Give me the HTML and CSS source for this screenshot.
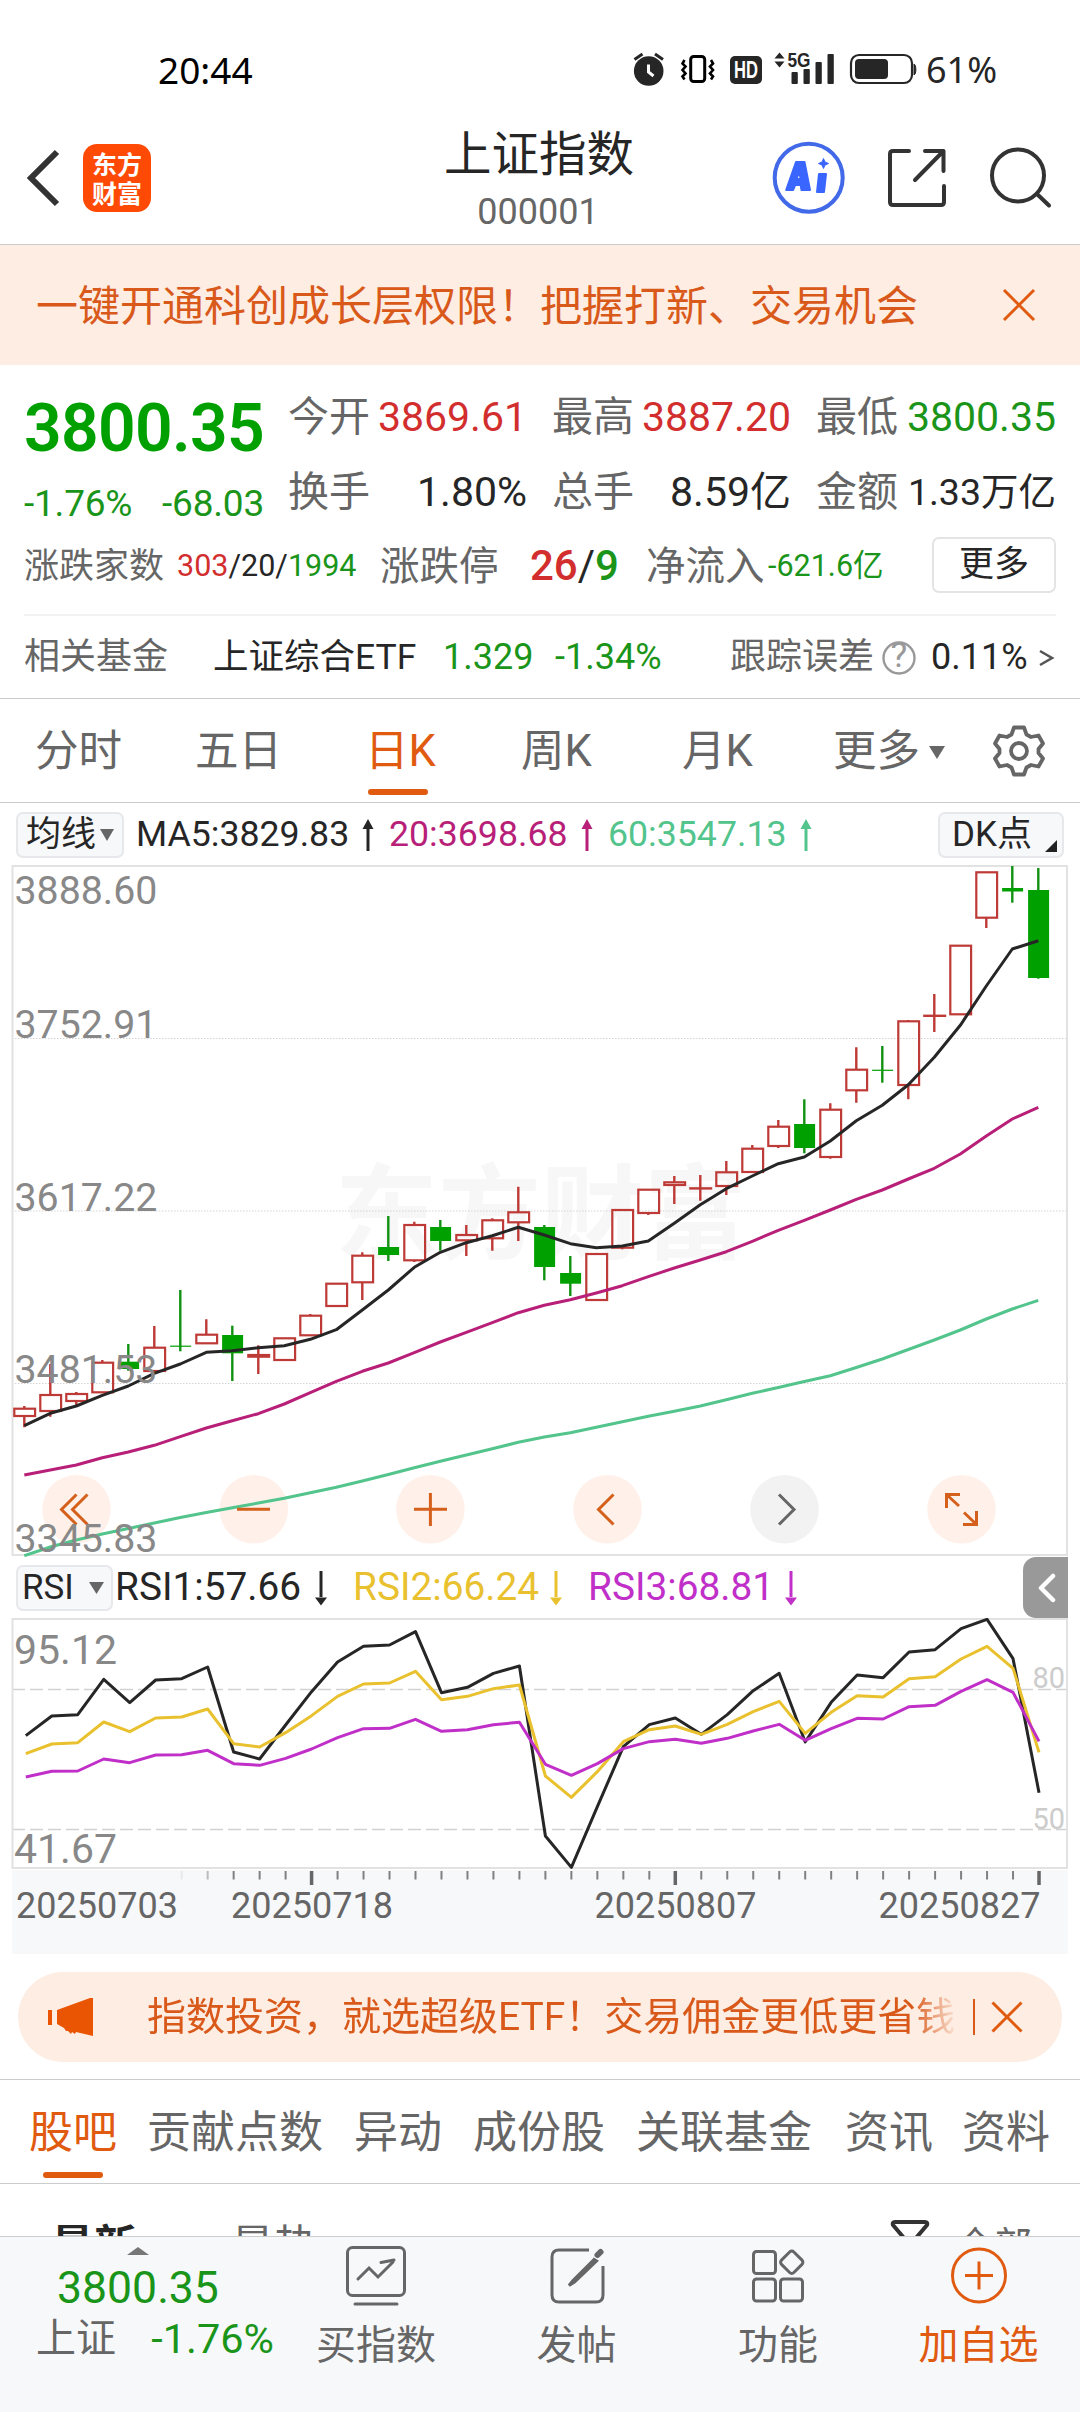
FILE: index.html
```html
<!DOCTYPE html>
<html lang="zh-CN">
<head>
<meta charset="utf-8">
<title>上证指数 000001</title>
<link rel="stylesheet" href="styles.css">
</head>
<body>
<div class="screen">
  <div class="status">
    <span class="clock">20:44</span>
    <svg class="status-icons" width="290" height="40" viewBox="630 50 290 40">
      <g fill="#262626">
        <circle cx="648.7" cy="71" r="14.8"/>
        <path d="M634.5 59.5l8-5.5M663 59.5l-8-5.5" stroke="#262626" stroke-width="3" fill="none"/>
        <path d="M648.5 64.500v7.500l5 4" stroke="#fff" stroke-width="3" fill="none"/>
        <rect x="690.700" y="56.500" width="14" height="25" rx="3" fill="none" stroke="#000" stroke-width="3"/>
        <path d="M684.500 60l-2 3.500 3 3-3 3.500 3 3.500-3 3 2 3M711 60l2 3.500-3 3 3 3.500-3 3.500 3 3-2 3" fill="none" stroke="#000" stroke-width="2.600"/>
        <rect x="730" y="56" width="32" height="28" rx="5"/>
        <path d="M774.500 58.500l5-6 5 6zM774.500 61.500l5 6 5-6z"/>
        <rect x="791.500" y="72" width="6.300" height="12" rx="1"/>
        <rect x="803.500" y="69" width="6.300" height="15" rx="1"/>
        <rect x="815.500" y="62" width="6.300" height="22" rx="1"/>
        <rect x="827.500" y="54" width="6.300" height="30" rx="1"/>
        <rect x="851" y="55" width="61" height="28" rx="8" fill="none" stroke="#262626" stroke-width="2.200"/>
        <rect x="855" y="59" width="33" height="20" rx="4"/>
        <path d="M914 64c2.500 1 2.500 10 0 11z" stroke="#262626"/>
      </g>
      <text class="hd" x="746" y="78" text-anchor="middle" textLength="24" lengthAdjust="spacingAndGlyphs">HD</text>
      <text class="fiveg" x="787.500" y="67" textLength="23" lengthAdjust="spacingAndGlyphs">5G</text>
    </svg>
    <span class="battery">61%</span>
  </div>

  <header class="header">
    <div class="head-left">
      <svg width="34" height="58" viewBox="0 0 34 58"><path d="M31 3L5 29l26 26" fill="none" stroke="#333" stroke-width="6"/></svg>
      <div class="logo"><span>东方</span><span>财富</span></div>
    </div>
    <div class="head-title"><h1>上证指数</h1><p>000001</p></div>
    <div class="head-right">
      <svg width="74" height="74" viewBox="0 0 74 74"><circle cx="36.700" cy="36.700" r="34" fill="#fff" stroke="#4169e8" stroke-width="4"/><g fill="#3a66ff" stroke="#3a66ff" stroke-width="2" stroke-linejoin="round"><path fill-rule="evenodd" d="M24 21h8.500l5.500 28h-8.500l-.8-5h-5.500l-2 5h-7zM27.500 30l-3 8h4z"/><path d="M47 33h7l-2 18h-7z"/><path stroke-width="1" d="M51.500 17.500l1.500 3.500 3.500 1.500-3.500 1.500-1.500 3.500-1.500-3.500-3.500-1.500 3.500-1.500z"/></g></svg>
      <svg width="58" height="58" viewBox="0 0 58 58" fill="none" stroke="#333" stroke-width="4" stroke-linecap="round" stroke-linejoin="round"><path d="M21 2H5Q2 2 2 5v48q0 3 3 3h48q3 0 3-3V37"/><path d="M37 2h18.500v20M54.500 3L27 31"/></svg>
      <svg width="64" height="64" viewBox="0 0 64 64" fill="none" stroke="#333" stroke-width="4" stroke-linecap="round"><circle cx="30" cy="29.500" r="26"/><path d="M49 48l12 11.500"/></svg>
    </div>
  </header>

  <div class="notice">
    <span>一键开通科创成长层权限！把握打新、交易机会</span>
    <svg width="34" height="34" viewBox="0 0 34 34"><path d="M2 2l30 30M32 2L2 32" stroke="#e05a10" stroke-width="3"/></svg>
  </div>

  <section class="quote">
    <div class="quote-main">
      <div class="price-col"><strong>3800.35</strong><p><span>-1.76%</span><span>-68.03</span></p></div>
      <dl class="stats">
        <div><dt>今开</dt><dd class="red">3869.61</dd></div>
        <div><dt>最高</dt><dd class="red">3887.20</dd></div>
        <div><dt>最低</dt><dd class="green">3800.35</dd></div>
        <div><dt>换手</dt><dd>1.80%</dd></div>
        <div><dt>总手</dt><dd>8.59亿</dd></div>
        <div><dt>金额</dt><dd class="tight">1.33万亿</dd></div>
      </dl>
    </div>
    <div class="breadth">
      <span class="lab s35">涨跌家数</span>
      <span class="ratio"><i class="red">303</i>/20/<i class="green">1994</i></span>
      <span class="lab s39">涨跌停</span>
      <span class="limit"><i class="red">26</i>/<i class="green">9</i></span>
      <span class="lab s39">净流入</span>
      <span class="flow green">-621.6亿</span>
      <button class="more">更多</button>
    </div>
    <div class="fund">
      <span class="lab">相关基金</span><span>上证综合ETF</span><span class="green">1.329</span><span class="green">-1.34%</span><span class="lab">跟踪误差</span>
      <svg width="34" height="34" viewBox="0 0 34 34"><circle cx="17" cy="17" r="15.500" fill="none" stroke="#999" stroke-width="2.400"/><text x="17" y="26" text-anchor="middle" class="qmark">?</text></svg>
      <span>0.11%</span>
      <svg width="17" height="20" viewBox="0 0 17 20"><path d="M2 3l12 7-12 7" fill="none" stroke="#555" stroke-width="2.600"/></svg>
    </div>
  </section>

  <nav class="periods">
    <span>分时</span><span>五日</span><span class="on">日K</span><span>周K</span><span>月K</span><span class="with-caret">更多<svg width="16" height="13" viewBox="0 0 16 13"><path d="M0 0h16L8 13z" fill="#666"/></svg></span>
    <svg class="gear" width="54" height="54" viewBox="-27 -27 54 54" fill="none" stroke="#666" stroke-width="3.800" stroke-linejoin="round"><path d="M-5-23.500H5L7.500-16.500 12-14 19.500-15.500 24-7.500 19.500-2V2L24 7.500 19.500 15.500 12 14 7.500 16.500 5 23.500H-5L-7.500 16.500-12 14-19.500 15.500-24 7.500-19.500 2V-2L-24-7.500-19.500-15.500-12-14-7.500-16.500z"/><circle r="8"/></svg>
  </nav>

  <div class="ma-row">
    <button class="chip">均线<svg width="14" height="12" viewBox="0 0 14 12"><path d="M0 0h14L7 12z" fill="#666"/></svg></button>
    <span class="ma5">MA5:3829.83</span><svg class="arrow ma5" width="12" height="34" viewBox="0 0 12 34"><path d="M6 33V8" stroke="currentColor" stroke-width="3"/><path d="M6 1l5.500 10h-11z" fill="currentColor"/></svg>
    <span class="ma20">20:3698.68</span><svg class="arrow ma20" width="12" height="34" viewBox="0 0 12 34"><path d="M6 33V8" stroke="currentColor" stroke-width="3"/><path d="M6 1l5.500 10h-11z" fill="currentColor"/></svg>
    <span class="ma60">60:3547.13</span><svg class="arrow ma60" width="12" height="34" viewBox="0 0 12 34"><path d="M6 33V8" stroke="currentColor" stroke-width="3"/><path d="M6 1l5.500 10h-11z" fill="currentColor"/></svg>
    <button class="chip dk">DK点<svg width="12" height="12" viewBox="0 0 12 12"><path d="M12 0v12H0z" fill="#222"/></svg></button>
  </div>

  <svg class="kline" width="1080" height="694" viewBox="0 863 1080 694">
    <text class="watermark" x="335" y="1251" textLength="412">东方财富</text>
    <g class="grid"><path d="M12 1038.500H1067M12 1211H1067M12 1383.500H1067"/></g>
    <rect class="frame" x="12.500" y="866" width="1054.500" height="689"/>
    <g class="ctl">
      <circle cx="76.500" cy="1509.300" r="34.300"/><circle cx="253.800" cy="1509.300" r="34.300"/><circle cx="430.400" cy="1509.300" r="34.300"/><circle cx="607.500" cy="1509.300" r="34.300"/><circle class="off" cx="784.500" cy="1509.300" r="34.300"/><circle cx="961.500" cy="1509.300" r="34.300"/>
    </g>
    <g id="candles"></g>
    <g id="averages"></g>
    <g class="ctl-icons">
      <path d="M76.500 1494.500l-15 15 15 15M87.500 1494.500l-15 15 15 15"/>
      <path d="M237 1509.300h33M414 1509.300h33M430.400 1493v33"/>
      <path d="M613.500 1494.500l-15 15 15 15"/>
      <path class="off" d="M779 1494.500l15 15-15 15"/>
      <path d="M946.500 1508v-13.500h13.500M947 1495l12 11M976.500 1511v13.500h-13.500M976 1524l-12-11.500"/>
    </g>
    <g class="scale"><text x="14.500" y="904">3888.60</text><text x="14.500" y="1038">3752.91</text><text x="14.500" y="1211">3617.22</text><text x="14.500" y="1382.700">3481.53</text><text x="14.500" y="1552">3345.83</text></g>
  </svg>

  <div class="rsi-row">
    <button class="chip">RSI<svg width="15" height="12" viewBox="0 0 15 12"><path d="M0 0h15L7.500 12z" fill="#666"/></svg></button>
    <span class="rsi1">RSI1:57.66</span><svg class="arrow rsi1" width="12" height="36" viewBox="0 0 12 36"><path d="M6 1v26" stroke="currentColor" stroke-width="3"/><path d="M6 35.500l6-8H0z" fill="currentColor"/></svg>
    <span class="rsi2">RSI2:66.24</span><svg class="arrow rsi2" width="12" height="36" viewBox="0 0 12 36"><path d="M6 1v26" stroke="currentColor" stroke-width="3"/><path d="M6 35.500l6-8H0z" fill="currentColor"/></svg>
    <span class="rsi3">RSI3:68.81</span><svg class="arrow rsi3" width="12" height="36" viewBox="0 0 12 36"><path d="M6 1v26" stroke="currentColor" stroke-width="3"/><path d="M6 35.500l6-8H0z" fill="currentColor"/></svg>
    <button class="drawer"><svg width="20" height="30" viewBox="0 0 20 30"><path d="M16 3L4 15l12 12" fill="none" stroke="#fff" stroke-width="4.500" stroke-linecap="round" stroke-linejoin="round"/></svg></button>
  </div>

  <svg class="rsi" width="1080" height="336" viewBox="0 1618 1080 336">
    <rect x="12" y="1870" width="1056" height="84" fill="#f7f8fa"/>
    <path class="bands" d="M12 1689.500H1067M12 1829.500H1067"/>
    <rect class="frame" x="12.500" y="1619" width="1054.500" height="249"/>
    <g class="scale wide"><text x="14" y="1664">95.12</text><text x="14" y="1863">41.67</text></g>
    <g class="bandtext"><text x="1065" y="1688" text-anchor="end">80</text><text x="1065" y="1828.500" text-anchor="end">50</text></g>
    <g id="oscillators"></g>
    <g id="ticks"></g>
    <g class="dates"><text x="16" y="1917.700">20250703</text><text x="231" y="1917.700">20250718</text><text x="594.500" y="1917.700">20250807</text><text x="878.500" y="1917.700">20250827</text></g>
  </svg>

  <div class="promo">
    <svg width="46" height="40" viewBox="0 0 46 40" fill="#ea5504"><path d="M0 13h4v15H0zM9 13L42 1h3v38l-17-4-1 2-3-2-1 2-3-3-2 0-2-3-7-4z"/></svg>
    <span>指数投资，就选超级ETF！交易佣金更低更省钱</span>
    <i></i>
    <svg width="32" height="32" viewBox="0 0 32 32"><path d="M1.500 1.500l29 29M30.500 1.500l-29 29" stroke="#e05a10" stroke-width="3"/></svg>
  </div>

  <nav class="sections"><span class="on">股吧</span><span>贡献点数</span><span>异动</span><span>成份股</span><span>关联基金</span><span>资讯</span><span>资料</span></nav>

  <div class="posts">
    <b>最新</b><span>最热</span>
    <svg width="40" height="36" viewBox="0 0 40 36"><path d="M5 2h30q3 0 2 3L26 18v14H14V18L3 5Q2 2 5 2z" fill="none" stroke="#333" stroke-width="4"/></svg>
    <span>全部</span>
  </div>

  <footer class="dock">
    <div class="ticker">
      <svg width="22" height="8" viewBox="0 0 22 8"><path d="M11 0l11 8H0z" fill="#777"/></svg>
      <strong>3800.35</strong>
      <p><span>上证</span><em>-1.76%</em></p>
    </div>
    <div class="act">
      <svg width="60" height="62" viewBox="0 0 60 62" fill="none" stroke="#666" stroke-width="3"><rect x="1.500" y="3.500" width="57" height="48" rx="5"/><path d="M12 35l11-11 9 9 15-15M35 18.500l13-2.500" stroke-linecap="round"/><path d="M9 60h42" stroke-linecap="round"/></svg>
      <span>买指数</span>
    </div>
    <div class="act">
      <svg width="56" height="62" viewBox="0 0 56 62" fill="none" stroke="#666" stroke-width="3"><path d="M40 6H10q-7 0-7 7v38q0 7 7 7h37q7 0 7-7V22"/><path d="M45 15.500L24 36.500l-4 5 5.500-3.500L47.500 17z" fill="#666"/><path d="M48.500 11l3-3" stroke-width="6" stroke-linecap="round"/></svg>
      <span>发帖</span>
    </div>
    <div class="act">
      <svg width="54" height="62" viewBox="0 0 54 62" fill="none" stroke="#666" stroke-width="3"><rect x="2.500" y="7.500" width="22" height="22" rx="3"/><rect x="2.500" y="35" width="22" height="22" rx="3"/><rect x="29.500" y="35" width="22" height="22" rx="3"/><rect x="32" y="9.500" width="17.500" height="17.500" rx="3" transform="rotate(45 40.750 18.250)"/></svg>
      <span>功能</span>
    </div>
    <div class="act add">
      <svg width="60" height="62" viewBox="0 0 60 62" fill="none" stroke="#e05a10" stroke-width="3"><circle cx="30" cy="31.500" r="26.500"/><path d="M16 31.500h28M30 17.500v28"/></svg>
      <span>加自选</span>
    </div>
  </footer>
</div>
<script src="chart.js"></script>
</body>
</html>
```
FILE: styles.css
```css
* { box-sizing: border-box; margin: 0; padding: 0; }
body { background: #fff; }
.screen {
  width: 1080px; height: 2412px; overflow: hidden; background: #fff; color: #262626;
  font-family: Roboto, "Noto Sans CJK SC", sans-serif; font-size: 36px; line-height: 1.2;
  display: flex; flex-direction: column;
}
.screen > * { flex-shrink: 0; }
svg { display: block; flex-shrink: 0; }
i, em { font-style: normal; }
button { font: inherit; color: inherit; border: 0; background: none; white-space: nowrap; }
span, dt, dd, h1 { white-space: nowrap; }
.red { color: #d22e2e; }
.green { color: #1a951a; }

.status { height: 112px; padding: 28px 0 0 158px; display: flex; align-items: center; }
.clock { width: 472px; font-family: "Noto Sans", sans-serif; font-size: 37px; color: #000; }
.status-icons { margin-right: 6px; }
.battery { font-family: "Noto Sans", sans-serif; font-size: 36px; }
.hd { font: 700 23px "Liberation Sans", sans-serif; fill: #fff; }
.fiveg { font: 700 20px "Liberation Sans", sans-serif; fill: #262626; }

.header { height: 133px; border-bottom: 1px solid #ccc; display: grid; grid-template-columns: 400px 278px 402px; }
.head-left { display: flex; align-items: center; gap: 23px; padding-left: 26px; }
.logo { width: 68px; height: 68px; border-radius: 14px; background: #ff4a05; color: #fff; display: flex; flex-direction: column; align-items: center; justify-content: center; font-size: 25px; line-height: 29px; font-weight: 700; font-family: "Noto Sans CJK SC", sans-serif; }
.head-title { text-align: center; padding-top: 15px; }
.head-title h1 { font-size: 47.500px; line-height: 56px; font-weight: 400; }
.head-title p { font-size: 36px; line-height: 44px; margin-top: 7px; padding-right: 2px; color: #666; }
.head-right { display: flex; align-items: center; gap: 42px; padding-left: 94px; }

.notice { height: 120px; background: #fdede3; color: #d9591a; font-size: 42px; display: flex; align-items: center; justify-content: space-between; padding: 4px 44px 0 36px; }
.notice svg { margin-bottom: 5px; }

.quote { height: 334px; padding: 24px 24px 0; border-bottom: 1px solid #ccc; }
.quote-main { display: flex; height: 146px; }
.price-col { width: 264px; color: #00a000; }
.price-col strong { display: block; font-size: 66px; line-height: 80px; font-weight: 600; letter-spacing: -.700px; }
.price-col p { display: flex; justify-content: space-between; width: 240px; font-size: 37px; line-height: 44px; padding-top: 13px; color: #1a951a; letter-spacing: -.200px; }
.stats { display: grid; grid-template-columns: 239px 239px 240px; column-gap: 25px; grid-template-rows: 56px 56px; row-gap: 19px; }
.stats div { display: flex; justify-content: space-between; align-items: center; line-height: 56px; }
.stats dt { font-size: 41px; color: #666; }
.stats dd { font-size: 41px; }
.stats .tight { font-size: 37.500px; }
.lab { color: #666; }
.breadth { display: grid; grid-template-columns: 153px 203px 150px 116px 122px 164px 124px; align-items: center; height: 59px; }
.breadth span { padding-top: 4px; }
.s35 { font-size: 35px; }
.s39 { font-size: 39.500px; }
.ratio { font-size: 30.500px; }
.limit { font-size: 42px; }
.limit i { font-weight: 500; }
.flow { font-size: 30.500px; }
.more { height: 56px; border: 2px solid #e4e4e4; border-radius: 7px; font-size: 35px; }
.fund { margin-top: 20px; border-top: 2px solid #f3f3f3; height: 85px; display: grid; grid-template-columns: 189px 230px 112px 175px 152px 49px 107px 17px; align-items: center; }
.fund :nth-child(2) { font-size: 35.500px; }
.qmark { font-size: 26px; fill: #999; }

.periods { height: 104px; border-bottom: 1px solid #ccc; padding-left: 35px; display: grid; grid-template-columns: 160px 170px 156px 161px 151px 159px 54px; align-items: center; font-size: 43.500px; color: #666; line-height: 106px; }
.periods .on { color: #e05a10; position: relative; }
.periods .on::after { content: ""; position: absolute; left: 3px; bottom: 10px; width: 60px; height: 6px; border-radius: 3px; background: #e05a10; }
.with-caret { display: flex; align-items: center; gap: 9px; }
.gear { margin-top: -3px; }

.chip { height: 46px; border: 2px solid #e6e8ec; border-radius: 7px; background: #f7f8fa; display: flex; align-items: center; }
.arrow { align-self: center; }
.ma-row { height: 60px; padding: 3px 16px 0; display: grid; grid-template-columns: 120px 226px 27px 192px 27px 192px 138px 126px; align-items: center; font-size: 35.700px; }
.ma-row .chip { width: 108px; padding-left: 8px; font-size: 35px; gap: 4px; }
.ma-row .dk { width: 126px; padding-left: 12px; gap: 13px; font-size: 35px; }
.dk svg { align-self: flex-end; margin-bottom: 4px; }
.ma5, .rsi1 { color: #262626; }
.ma20 { color: #b81f78; }
.ma60 { color: #52c48c; }
.rsi2 { color: #e9c12e; }
.rsi3 { color: #c02fc8; }

.frame { fill: none; stroke: #e2e2e2; stroke-width: 2; }
.grid path { stroke: #d4d4d4; stroke-width: 1; stroke-dasharray: 1.500 1.500; fill: none; }
.watermark { font: 700 103px "Noto Sans CJK SC", sans-serif; fill: #f7f7f7; }
.scale text { font-size: 39.300px; fill: #888; }
.scale.wide text { font-size: 41px; }
.ctl circle { fill: #fff1ea; }
.ctl circle.off { fill: #f2f2f2; }
.ctl-icons path { fill: none; stroke: #d5601c; stroke-width: 3; }
.ctl-icons path.off { stroke: #666; }
.up { fill: none; stroke: #bd3a36; stroke-width: 2.200; }
.wick-up { stroke: #bd3a36; stroke-width: 2.400; }
.down { fill: #00a000; }
.wick-down { stroke: #119111; stroke-width: 2.400; }
.line { fill: none; stroke: currentColor; stroke-width: 3; stroke-linejoin: round; }

.rsi-row { height: 61px; padding-left: 16px; width: 1068px; display: grid; grid-template-columns: 99px 200px 38px 197px 38px 197px 238px 45px; align-items: center; font-size: 38.800px; }
.rsi-row .chip { width: 97px; padding-left: 4px; font-size: 35px; gap: 15px; }
.drawer { width: 45px; height: 61px; background: #999; border-radius: 13px 0 0 13px; display: flex; align-items: center; justify-content: center; padding-left: 3px; }
.bands { stroke: #d2d2d2; stroke-width: 1.500; stroke-dasharray: 13 5; fill: none; }
.bandtext text { font-size: 29px; fill: #ccc; }
.dates text { font-size: 36px; fill: #666; }

.promo { margin: 18px 18px 0; height: 90px; border-radius: 45px; background: #fdede3; color: #d9591a; display: flex; align-items: center; padding: 0 39px 0 30px; font-size: 39px; }
.promo span { width: 812px; margin-left: 53px; overflow: hidden; -webkit-mask-image: linear-gradient(to right, #000 765px, transparent 812px); mask-image: linear-gradient(to right, #000 765px, transparent 812px); }
.promo i { width: 2px; height: 36px; background: #d9591a; margin: 0 16px 0 15px; }

.sections { margin-top: 17px; height: 105px; border-top: 1px solid #ccc; border-bottom: 1px solid #ccc; padding-left: 29px; display: grid; grid-template-columns: 118px 207px 119px 163px 209px 117px 100px; line-height: 107px; font-size: 44px; color: #666; }
.sections .on { color: #e05a10; position: relative; }
.sections .on::after { content: ""; position: absolute; left: 14px; bottom: 9px; width: 60px; height: 6px; border-radius: 3px; background: #e05a10; }

.posts { height: 52px; overflow: hidden; padding: 36px 0 0 51px; display: grid; grid-template-columns: 180px 659px 66px 80px; align-items: start; font-size: 43px; line-height: 52px; color: #666; }
.posts b { color: #262626; }
.posts > :last-child { font-size: 38px; }

.dock { height: 176px; background: #f7f8fa; border-top: 1px solid #ccc; display: grid; grid-template-columns: 276px 200px 201px 202px 199px; }
.ticker { text-align: center; padding-top: 10px; }
.ticker svg { margin: 0 auto; }
.ticker strong { display: block; font-size: 44.500px; line-height: 52px; margin-top: 7px; font-weight: 400; color: #1a951a; }
.ticker p { display: flex; justify-content: space-between; align-items: center; padding: 0 2px 0 36px; line-height: 50px; margin-top: 0; font-size: 40px; color: #666; }
.ticker em { color: #1a951a; font-size: 41.500px; }
.act { display: flex; flex-direction: column; align-items: center; padding-top: 7px; font-size: 40px; color: #666; }
.act span { line-height: 50px; margin-top: 15px; }
.act.add { color: #e05a10; }
```
FILE: chart.js
```js
// Each candle: [bodyTop, bodyBottom, high, low, falling]; values are chart y positions.
const candles = [
  [1408.7,1416,1406,1427.3,0],[1395,1411,1364,1416.7,0],[1394,1401,1392,1406,0],[1362.7,1392.3,1360,1392.3,0],
  [1361.7,1369,1344,1370.7,1],[1347.7,1371,1326,1373.3,0],[1345.6,1346.8,1290,1351.3,1],[1334.7,1343.3,1319.3,1344,0],
  [1335,1353.3,1325.7,1381,1],[1355,1356.7,1345.3,1374,0],[1338.3,1360,1338.3,1360,0],[1315.7,1335.3,1314,1336,0],
  [1283.7,1306,1283.7,1306,0],[1255.7,1282.3,1252.3,1300,0],[1247,1255,1216,1261,1],[1225,1260.3,1221.7,1262,0],
  [1227,1241,1220,1250.7,1],[1235,1240.3,1225,1256,0],[1220.3,1238.3,1218.3,1250.7,0],[1212.3,1222.3,1186.7,1241,0],
  [1227,1267,1225,1280.3,1],[1273,1283.7,1256,1296,1],[1254,1300,1254,1300,0],[1210,1247.7,1210,1249.3,0],
  [1189.7,1213,1189.7,1215,0],[1182.3,1185,1176,1204,0],[1188.3,1188.3,1175,1200.7,0],[1172.3,1186,1161,1195,0],
  [1148.7,1172,1145,1172,0],[1126.7,1146,1120,1148,0],[1124,1148,1099.3,1153.3,1],[1109.7,1157,1103.3,1158.7,0],
  [1069.7,1090.3,1047.3,1102.7,0],[1069.7,1070.9,1046,1082.7,1],[1021.3,1085,1020,1099.3,0],[1015.7,1015.7,994,1032,0],
  [945.7,1014.3,945.7,1014.3,0],[872.3,917.7,872.3,928,0],[888,891.5,866,902.7,1],[890,978,868,978.7,1]
];
const averages = {
  ma5: [1425.7,1413.3,1406,1395.3,1386,1373.3,1364,1352.3,1350.7,1347.7,1345.7,1339.3,1329.7,1310,1290,1267.3,1252.3,1242.7,1235.7,1227.3,1235,1243.7,1247.7,1246,1241,1223.3,1204.7,1188.7,1176,1163.7,1157,1141,1120.7,1105.3,1084.7,1057.3,1025.3,986,949,940.7],
  ma20: [1475,1470,1465,1457.7,1452,1445.3,1436.7,1428,1420.7,1413.7,1404,1392.7,1381.3,1371.3,1363,1352.7,1342,1332.3,1322.7,1312.7,1305.3,1299.7,1293,1285.7,1276.7,1268,1260,1251.7,1241.3,1230.3,1220.3,1210,1199.3,1190,1179,1168.3,1154,1136,1119,1107.3],
  ma60: [1555.7,1547,1540,1534,1528.5,1523,1517.5,1512.5,1507.8,1503,1498.3,1492.8,1487.3,1481,1474.5,1467.7,1461.3,1455,1448.7,1442.3,1437,1432.7,1427.3,1421.8,1416.3,1411.3,1406,1399.7,1393.3,1387.5,1381.5,1375.7,1367.5,1359,1349.5,1340,1330,1319,1309,1300.3]
};
const oscillators = {
  rsi1: [587,528,524,418,488,420,416,381,636,657,555,455,366,319,315,275,458,442,400,378,888,982,800,620,554,534,583,524,452,400,606,487,405,413,336,329,266,238,356,758],
  rsi2: [641,612,608,546,575,534,531,507,611,621,578,527,469,432,429,394,479,469,446,435,708,772,695,605,569,558,583,553,515,484,580,517,467,471,416,410,357,319,385,637],
  rsi3: [711,694,693,657,668,645,644,631,671,676,655,627,593,566,565,538,574,569,554,547,673,706,671,626,605,598,610,595,573,553,601,566,535,537,500,496,454,419,457,604]
};

const priceX = i => 24.3 + i * 26;
const rsiX = i => 25.8 + i * 25.98;

document.getElementById('candles').innerHTML = candles.map(([top, bottom, high, low, falling], i) => {
  const x = priceX(i), h = bottom - top;
  if (falling) {
    return `<path class="wick-down" d="M${x} ${high}V${low}"/><rect class="down" x="${x - 10.2}" y="${top}" width="21" height="${h}"/>`;
  }
  return `<path class="wick-up" d="M${x} ${high}V${top}M${x} ${bottom}V${low}"/><rect class="up" x="${x - 10}" y="${top}" width="20.800" height="${h || 0.2}"/>`;
}).join('');

const polyline = (name, ys, fx) =>
  `<polyline class="line ${name}" points="${ys.map((y, i) => fx(i) + ',' + y).join(' ')}"/>`;

document.getElementById('averages').innerHTML =
  Object.entries(averages).map(([name, ys]) => polyline(name, ys, priceX)).join('');
document.getElementById('oscillators').innerHTML =
  Object.entries(oscillators).map(([name, ys]) => polyline(name, ys.map(v => 1540 + v / 3), rsiX)).join('');

let ticks = '';
for (let i = 6; i < 40; i++) {
  const major = i === 11 || i === 25 || i === 39;
  const color = i === 6 ? '#e8e8ea' : i === 7 ? '#bbb' : major ? '#666' : '#808080';
  ticks += `<path d="M${rsiX(i)} 1871v${major ? 14 : 8.5}" stroke="${color}" stroke-width="${major ? 3.5 : 2}"/>`;
}
document.getElementById('ticks').innerHTML = ticks;
```
